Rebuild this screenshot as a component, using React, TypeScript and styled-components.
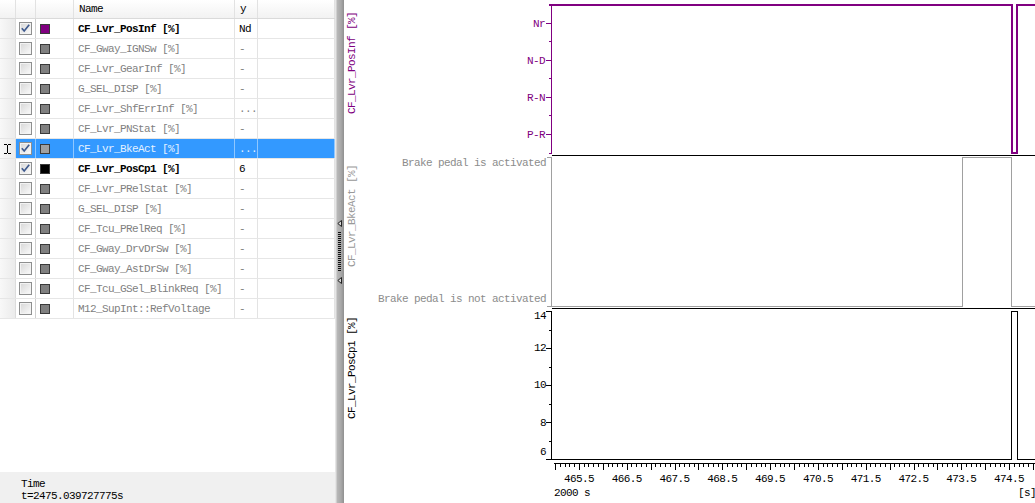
import React from "react";
import styled, { createGlobalStyle } from "styled-components";

const PURPLE = "#800080";
const SIG_GRAY = "#a0a0a0";
const MONO = `"Liberation Mono", "DejaVu Sans Mono", monospace`;
const COLS = "16px 20px 38px 161px 23px 1fr";

const GlobalStyle = createGlobalStyle`
  html, body { margin: 0; padding: 0; background: #fff; }
  body { font-family: ${MONO}; font-size: 11px; letter-spacing: -0.6px; color: #000; }
`;

type Tone = "active" | "muted" | "selected";

interface Signal {
  name: string;
  value: string;
  checked?: boolean;
  selected?: boolean;
  active?: boolean;
  swatch?: string;
}

const signals: Signal[] = [
  { name: "CF_Lvr_PosInf [%]", value: "Nd", checked: true, active: true, swatch: PURPLE },
  { name: "CF_Gway_IGNSw [%]", value: "-" },
  { name: "CF_Lvr_GearInf [%]", value: "-" },
  { name: "G_SEL_DISP [%]", value: "-" },
  { name: "CF_Lvr_ShfErrInf [%]", value: "..." },
  { name: "CF_Lvr_PNStat [%]", value: "-" },
  { name: "CF_Lvr_BkeAct [%]", value: "...", checked: true, selected: true, swatch: "#a0a0a0" },
  { name: "CF_Lvr_PosCp1 [%]", value: "6", checked: true, active: true, swatch: "#000" },
  { name: "CF_Lvr_PRelStat [%]", value: "-" },
  { name: "G_SEL_DISP [%]", value: "-" },
  { name: "CF_Tcu_PRelReq [%]", value: "-" },
  { name: "CF_Gway_DrvDrSw [%]", value: "-" },
  { name: "CF_Gway_AstDrSw [%]", value: "-" },
  { name: "CF_Tcu_GSel_BlinkReq [%]", value: "-" },
  { name: "M12_SupInt::RefVoltage", value: "-" },
];

const Root = styled.div`
  display: flex;
  width: 1035px;
  height: 503px;
  overflow: hidden;
`;

/* ---------- left: signal list ---------- */

const LeftPanel = styled.div`
  width: 335px;
  flex: none;
  display: flex;
  flex-direction: column;
  background: #fff;
`;

const TableWrap = styled.div`
  flex: 1;
`;

const HeaderRow = styled.div`
  display: grid;
  grid-template-columns: ${COLS};
  height: 19px;
  box-sizing: border-box;
  border-bottom: 1px solid #dadada;
  background: linear-gradient(#ffffff, #f2f2f2);
`;

const HeadCell = styled.div`
  display: flex;
  align-items: center;
  padding-left: 5px;
  border-right: 1px solid #e2e2e2;
  color: #000;
`;

const Row = styled.div<{ $selected?: boolean }>`
  display: grid;
  grid-template-columns: ${COLS};
  height: 20px;
  box-sizing: border-box;
  border-bottom: 1px solid #e6e6e6;
  background: ${(p) => (p.$selected ? "#3399ff" : "#fff")};
`;

const Cell = styled.div<{ $selected?: boolean }>`
  display: flex;
  align-items: center;
  overflow: hidden;
  white-space: nowrap;
  border-right: 1px solid
    ${(p) => (p.$selected ? "rgba(255,255,255,0.45)" : "#e3e3e3")};
`;

const RowHead = styled(Cell)`
  justify-content: center;
  background: linear-gradient(to right, #f8f8f8, #ebebeb);
  border-right-color: #dcdcdc;
`;

const CheckCell = styled(Cell)`
  justify-content: center;
  border-right-color: ${(p) => (p.$selected ? "rgba(255,255,255,0.45)" : "#cfcfcf")};
`;

const SwatchCell = styled(Cell)`
  padding-left: 4px;
`;

const TextCell = styled(Cell)`
  padding-left: 4px;
`;

const Label = styled.span<{ $tone: Tone; $bold?: boolean }>`
  color: ${(p) =>
    p.$tone === "active" ? "#000" : p.$tone === "selected" ? "#e4f1ff" : "#7f7f7f"};
  font-weight: ${(p) => (p.$bold ? "bold" : "normal")};
`;

const Box = styled.span`
  width: 13px;
  height: 13px;
  box-sizing: border-box;
  border: 1px solid #8e8f8f;
  background: linear-gradient(135deg, #d6d6d6, #fbfbfb);
  box-shadow: inset 0 0 0 1px #f3f3f3;
  display: flex;
  align-items: center;
  justify-content: center;
`;

const Swatch = styled.span<{ $color: string }>`
  width: 10px;
  height: 10px;
  box-sizing: border-box;
  border: 1px solid #3a3a3a;
  background: ${(p) => p.$color};
`;

const StatusBar = styled.div`
  height: 31px;
  box-sizing: border-box;
  background: #f0f0f0;
  padding: 6px 0 0 21px;
  line-height: 12px;
  color: #000;
`;

const CheckBox = ({ checked }: { checked?: boolean }) => (
  <Box>
    {checked && (
      <svg width="11" height="11" viewBox="0 0 11 11">
        <path d="M1.8 5.2 L4.2 8 L9.2 1.8" fill="none" stroke="#3f5a8e" strokeWidth="1.7" />
      </svg>
    )}
  </Box>
);

const IBeam = () => (
  <svg width="7" height="10" viewBox="0 0 7 10" shapeRendering="crispEdges">
    <path d="M0 0.5h3M4 0.5h3M3.5 1v8M0 9.5h3M4 9.5h3" stroke="#000" fill="none" />
  </svg>
);

const SignalRow = ({ s }: { s: Signal }) => {
  const tone: Tone = s.selected ? "selected" : s.active ? "active" : "muted";
  return (
    <Row $selected={s.selected}>
      <RowHead>{s.selected && <IBeam />}</RowHead>
      <CheckCell $selected={s.selected}>
        <CheckBox checked={s.checked} />
      </CheckCell>
      <SwatchCell $selected={s.selected}>
        <Swatch $color={s.swatch ?? "#808080"} />
      </SwatchCell>
      <TextCell $selected={s.selected}>
        <Label $tone={tone} $bold={tone === "active"}>
          {s.name}
        </Label>
      </TextCell>
      <TextCell $selected={s.selected}>
        <Label $tone={tone}>{s.value}</Label>
      </TextCell>
      <Cell $selected={s.selected} />
    </Row>
  );
};

/* ---------- splitter ---------- */

const Splitter = styled.div`
  width: 9px;
  flex: none;
  background: linear-gradient(
    to right,
    #e6e6e6 0,
    #e6e6e6 1px,
    #b8b8b8 2px,
    #a8a8a8 6px,
    #909090 9px
  );
  display: flex;
  flex-direction: column;
  align-items: center;
  justify-content: center;
  gap: 5px;
`;

const Dots = styled.div`
  width: 3px;
  height: 40px;
  background: repeating-linear-gradient(to bottom, #111 0 1px, transparent 1px 2px);
`;

const Arrow = () => (
  <svg width="5" height="7" viewBox="0 0 5 7">
    <path d="M4.5 0.5 L0.8 3.5 L4.5 6.5 Z" fill="#d8d8d8" stroke="#222" strokeWidth="1" />
  </svg>
);

/* ---------- right: plot ---------- */

const PlotPanel = styled.div`
  flex: 1;
  display: flex;
  flex-direction: column;
  background: #fff;
`;

const Pane = styled.div<{ $h: number }>`
  display: flex;
  flex: none;
  height: ${(p) => p.$h}px;
`;

const YTitle = styled.div<{ $offset: number }>`
  width: 18px;
  flex: none;
  box-sizing: border-box;
  padding: ${(p) => p.$offset}px 0 0 3px;
`;

const YTitleText = styled.span<{ $color: string }>`
  display: inline-block;
  writing-mode: vertical-rl;
  transform: rotate(180deg);
  white-space: nowrap;
  line-height: 11px;
  color: ${(p) => p.$color};
`;

const Chart = styled.svg`
  display: block;
  flex: none;
`;

const TickText = styled.text<{ $color: string }>`
  font-family: ${MONO};
  font-size: 11px;
  letter-spacing: -0.6px;
  fill: ${(p) => p.$color};
`;

const CHART_X = 362;
const CHART_W = 673;
const AXIS_X = 551.5;

interface Tick {
  y: number;
  major: boolean;
}

const YTicks = ({ ticks, color }: { ticks: Tick[]; color: string }) => (
  <g stroke={color} shapeRendering="crispEdges">
    {ticks.map((t, i) => (
      <line key={i} x1={t.major ? 546 : 549} x2={552} y1={t.y} y2={t.y} />
    ))}
  </g>
);

const PlotPane = ({
  top,
  h,
  title,
  color,
  offset,
  children,
}: {
  top: number;
  h: number;
  title: string;
  color: string;
  offset: number;
  children: React.ReactNode;
}) => (
  <Pane $h={h}>
    <YTitle $offset={offset}>
      <YTitleText $color={color}>{title}</YTitleText>
    </YTitle>
    <Chart width={CHART_W} height={h} viewBox={`${CHART_X} ${top} ${CHART_W} ${h}`}>
      {children}
    </Chart>
  </Pane>
);

const gearTicks: Tick[] = [
  { y: 23.5, major: true },
  { y: 41.5, major: false },
  { y: 60.5, major: true },
  { y: 78.5, major: false },
  { y: 97.5, major: true },
  { y: 115.5, major: false },
  { y: 134.5, major: true },
  { y: 153.5, major: false },
];

const gearLabels = [
  { y: 27, text: "Nr" },
  { y: 64, text: "N-D" },
  { y: 101, text: "R-N" },
  { y: 138, text: "P-R" },
];

const cpTicks: Tick[] = Array.from({ length: 9 }, (_, i) => ({
  y: Math.round(311 + i * 18.5) + 0.5,
  major: i % 2 === 0,
}));

const cpLabels = [
  { y: 319, text: "14" },
  { y: 351, text: "12" },
  { y: 388, text: "10" },
  { y: 426, text: "8" },
  { y: 455, text: "6" },
];

const xOf = (t: number) => 555 + (t - 465) * 47.8;

const xTicks = Array.from({ length: 101 }, (_, i) => ({
  x: Math.round(xOf(465 + i * 0.1)) + 0.5,
  major: i % 5 === 0,
}));

const xLabels = Array.from({ length: 10 }, (_, k) => 465.5 + k);

export default function App() {
  return (
    <>
      <GlobalStyle />
      <Root>
        <LeftPanel>
          <TableWrap>
            <HeaderRow>
              <HeadCell />
              <HeadCell />
              <HeadCell />
              <HeadCell>Name</HeadCell>
              <HeadCell>y</HeadCell>
              <HeadCell />
            </HeaderRow>
            {signals.map((s, i) => (
              <SignalRow key={i} s={s} />
            ))}
          </TableWrap>
          <StatusBar>
            <div>Time</div>
            <div>t=2475.039727775s</div>
          </StatusBar>
        </LeftPanel>

        <Splitter>
          <Arrow />
          <Dots />
          <Arrow />
        </Splitter>

        <PlotPanel>
          <PlotPane top={0} h={156} title="CF_Lvr_PosInf [%]" color={PURPLE} offset={12}>
            <g shapeRendering="crispEdges">
              <line x1={AXIS_X} x2={AXIS_X} y1={4} y2={154} stroke={PURPLE} />
              <YTicks ticks={gearTicks} color={PURPLE} />
              <polyline
                points="549,5 1012,5 1012,153 1017,153 1017,5 1035,5"
                fill="none"
                stroke={PURPLE}
                strokeWidth={2}
              />
              <line x1={552} x2={1035} y1={155.5} y2={155.5} stroke="#000" />
            </g>
            {gearLabels.map((l) => (
              <TickText key={l.text} x={545} y={l.y} textAnchor="end" $color={PURPLE}>
                {l.text}
              </TickText>
            ))}
          </PlotPane>

          <PlotPane top={156} h={153} title="CF_Lvr_BkeAct [%]" color="#999" offset={9}>
            <g shapeRendering="crispEdges" stroke={SIG_GRAY} fill="none">
              <line x1={AXIS_X} x2={AXIS_X} y1={157} y2={307} />
              <line x1={547} x2={552} y1={157.5} y2={157.5} />
              <line x1={547} x2={552} y1={306.5} y2={306.5} />
              <polyline points="552,306.5 962.5,306.5 962.5,157.5 1011.5,157.5 1011.5,306.5 1035,306.5" />
              <line x1={552} x2={1035} y1={308.5} y2={308.5} stroke="#000" />
            </g>
            <TickText x={546} y={166} textAnchor="end" $color="#8c8c8c">
              Brake pedal is activated
            </TickText>
            <TickText x={546} y={302} textAnchor="end" $color="#8c8c8c">
              Brake pedal is not activated
            </TickText>
          </PlotPane>

          <PlotPane top={309} h={153} title="CF_Lvr_PosCp1 [%]" color="#000" offset={8}>
            <g shapeRendering="crispEdges" stroke="#000" fill="none">
              <line x1={AXIS_X} x2={AXIS_X} y1={311} y2={460} />
              <YTicks ticks={cpTicks} color="#000" />
              <polyline points="552,459.5 1011.5,459.5 1011.5,311.5 1017.5,311.5 1017.5,459.5 1035,459.5" />
            </g>
            {cpLabels.map((l) => (
              <TickText key={l.text} x={546} y={l.y} textAnchor="end" $color="#000">
                {l.text}
              </TickText>
            ))}
          </PlotPane>

          <Pane $h={41}>
            <YTitle $offset={0} />
            <Chart width={CHART_W} height={41} viewBox={`${CHART_X} 462 ${CHART_W} 41`}>
              <g shapeRendering="crispEdges" stroke="#000">
                <line x1={554} x2={1035} y1={463.5} y2={463.5} />
                {xTicks.map((t, i) => (
                  <line key={i} x1={t.x} x2={t.x} y1={463} y2={t.major ? 470 : 467} />
                ))}
              </g>
              {xLabels.map((t) => (
                <TickText key={t} x={xOf(t)} y={482} textAnchor="middle" $color="#000">
                  {t.toFixed(1)}
                </TickText>
              ))}
              <TickText x={554} y={496} $color="#000">
                2000 s
              </TickText>
              <TickText x={1018} y={496} $color="#000">
                [s]
              </TickText>
            </Chart>
          </Pane>
        </PlotPanel>
      </Root>
    </>
  );
}
